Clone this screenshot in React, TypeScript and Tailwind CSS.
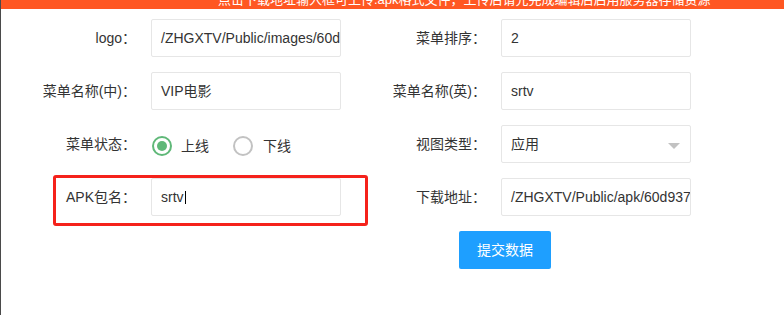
import React from "react";

function Label({ children }: { children: React.ReactNode }) {
  return (
    <div className="w-[140px] shrink-0 pr-[15px] text-right leading-[38px] whitespace-nowrap">
      {children}
    </div>
  );
}

function Box({ children, select }: { children?: React.ReactNode; select?: boolean }) {
  return (
    <div className="relative w-[190px] h-[38px] shrink-0 border border-[#e6e6e6] rounded-[2px] bg-white pl-[9px] leading-[36px] overflow-hidden whitespace-nowrap">
      {children}
      {select && (
        <span className="absolute right-[10px] top-[17px] w-0 h-0 border-x-[6px] border-x-transparent border-t-[6px] border-t-[#c2c2c2]" />
      )}
    </div>
  );
}

function Item({ label, children }: { label: string; children: React.ReactNode }) {
  return (
    <div className="flex w-[350px]">
      <Label>{label}</Label>
      {children}
    </div>
  );
}

export default function App() {
  return (
    <div className="relative w-[784px] h-[315px] bg-white border-l border-[#4a4a4a] overflow-hidden text-[14px] text-[#333] font-['Liberation_Sans','Noto_Sans_CJK_SC',sans-serif]">
      <div className="h-[9px] bg-[#ff5722] overflow-hidden">
        <div className="pl-[217px] mt-[-10px] leading-[20px] text-[13px] text-white whitespace-nowrap">
          点击下载地址输入框可上传.apk格式文件，上传后请先完成编辑后启用服务器存储资源
        </div>
      </div>

      <div className="pt-[10px] pl-[10px]">
        <div className="flex mb-[15px]">
          <Item label="logo：">
            <Box>/ZHGXTV/Public/images/60d9371a2b5c8.png</Box>
          </Item>
          <Item label="菜单排序：">
            <Box>2</Box>
          </Item>
        </div>

        <div className="flex mb-[15px]">
          <Item label="菜单名称(中)：">
            <Box>VIP电影</Box>
          </Item>
          <Item label="菜单名称(英)：">
            <Box>srtv</Box>
          </Item>
        </div>

        <div className="flex mb-[15px]">
          <Item label="菜单状态：">
            <div className="flex items-center h-[38px] pt-[4px] pl-[1px]">
              <span className="w-[20px] h-[20px] rounded-full border-2 border-[#5fb878] flex items-center justify-center">
                <span className="w-[10px] h-[10px] rounded-full bg-[#5fb878]" />
              </span>
              <span className="ml-[9px]">上线</span>
              <span className="ml-[24px] w-[20px] h-[20px] rounded-full border-2 border-[#c2c2c2]" />
              <span className="ml-[10px]">下线</span>
            </div>
          </Item>
          <Item label="视图类型：">
            <Box select>应用</Box>
          </Item>
        </div>

        <div className="flex mb-[15px]">
          <Item label="APK包名：">
            <Box>
              <span className="inline-flex items-center">
                srtv
                <span className="inline-block w-[1px] h-[13px] bg-black ml-[1px]" />
              </span>
            </Box>
          </Item>
          <Item label="下载地址：">
            <Box>/ZHGXTV/Public/apk/60d9371a2b5c8.apk</Box>
          </Item>
        </div>

        <div className="flex">
          <button className="ml-[448px] h-[38px] px-[18px] rounded-[2px] bg-[#1e9fff] text-white leading-[38px]">
            提交数据
          </button>
        </div>
      </div>

      <div className="absolute left-[52px] top-[175px] w-[315px] h-[51px] border-[3px] border-[#f5221b] rounded-[3px]" />
    </div>
  );
}
